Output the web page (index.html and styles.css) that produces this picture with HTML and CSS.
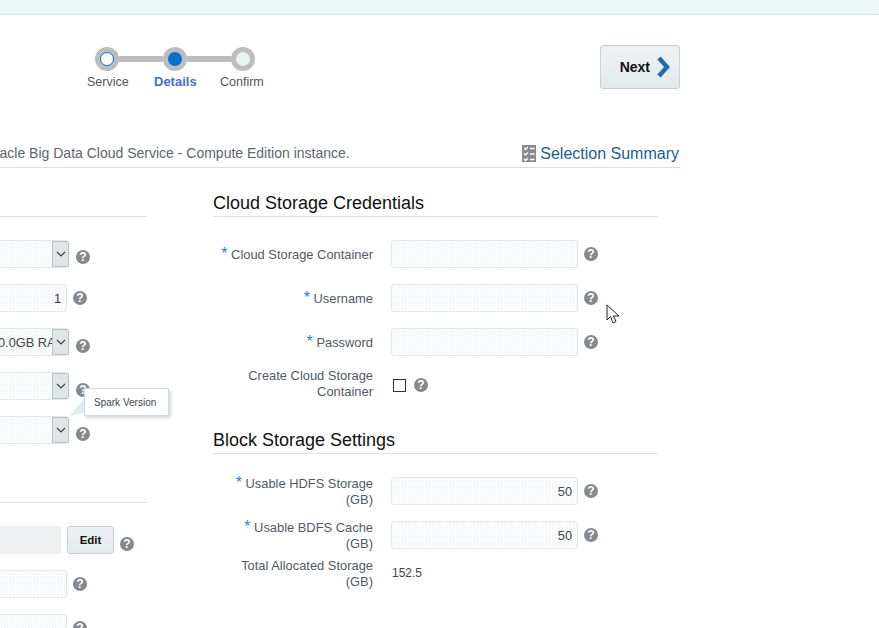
FILE: index.html
```html
<!DOCTYPE html>
<html>
<head>
	<meta charset="utf-8">
	<title>Details</title>
	<link rel="stylesheet" href="styles.css">
</head>
<body>
	<div class="band"></div>
	<div class="page">
		<div class="top">
			<div class="train">
				<div class="track">
					<span class="stop"><i class="dot visited"></i></span>
					<span class="line"></span>
					<span class="stop"><i class="dot current"></i></span>
					<span class="line"></span>
					<span class="stop"><i class="dot todo"></i></span>
				</div>
				<div class="steps">
					<span class="step">Service</span>
					<span class="step step-on">Details</span>
					<span class="step">Confirm</span>
				</div>
			</div>
			<button class="next">Next
				<svg width="14" height="22" viewBox="0 0 14 22"><path d="M3 2l8 9-8 9" fill="none" stroke="#1f6bb0" stroke-width="4.4"/></svg>
			</button>
		</div>
		<div class="intro">
			<span class="intro-text">Oracle Big Data Cloud Service - Compute Edition instance.</span>
			<a class="summary">
				<svg width="14" height="17" viewBox="0 0 14 17"><rect width="14" height="17" fill="#8a8a8a"/><path d="M2 3l1.500 1.500L6 2M2 8.500l1.500 1.500L6 7.500M2 14l1.500 1.500L6 13M8 3.500h4.500M8 9h4.500M8 14.500h4.500" fill="none" stroke="#fff" stroke-width="1.300"/></svg>
				Selection Summary
			</a>
		</div>
		<div class="columns">
			<div class="left">
				<div class="rule-top"></div>
				<div class="row row-first">
					<div class="select"><b class="arrow"><svg width="10" height="6" viewBox="0 0 10 6"><path d="M1 1l4 4 4-4" fill="none" stroke="#444" stroke-width="1.200"/></svg></b></div>
					<i class="help help-wide">?</i>
				</div>
				<div class="row">
					<div class="field num num-left">1</div>
					<i class="help">?</i>
				</div>
				<div class="row">
					<div class="select"><span class="select-val">0.0GB RAM</span><b class="arrow"><svg width="10" height="6" viewBox="0 0 10 6"><path d="M1 1l4 4 4-4" fill="none" stroke="#444" stroke-width="1.200"/></svg></b></div>
					<i class="help help-wide help-low">?</i>
				</div>
				<div class="row">
					<div class="select"><b class="arrow"><svg width="10" height="6" viewBox="0 0 10 6"><path d="M1 1l4 4 4-4" fill="none" stroke="#444" stroke-width="1.200"/></svg></b></div>
					<i class="help help-wide help-low">?</i>
				</div>
				<div class="row">
					<div class="select"><b class="arrow"><svg width="10" height="6" viewBox="0 0 10 6"><path d="M1 1l4 4 4-4" fill="none" stroke="#444" stroke-width="1.200"/></svg></b></div>
					<i class="help help-wide help-low">?</i>
				</div>
				<div class="rule-mid"></div>
				<div class="row row-edit">
					<div class="locked"></div>
					<button class="edit">Edit</button>
					<i class="help help-edit">?</i>
				</div>
				<div class="row">
					<div class="field"></div>
					<i class="help">?</i>
				</div>
				<div class="row">
					<div class="field"></div>
					<i class="help">?</i>
				</div>
				<div class="tip">Spark Version</div>
			</div>
			<div class="right">
				<h2 class="head">Cloud Storage Credentials</h2>
				<div class="form">
					<div class="frow">
						<label class="lab"><em>*</em> Cloud Storage Container</label>
						<div class="field wide"></div>
						<i class="help">?</i>
					</div>
					<div class="frow">
						<label class="lab"><em>*</em> Username</label>
						<div class="field wide"></div>
						<i class="help">?</i>
					</div>
					<div class="frow">
						<label class="lab"><em>*</em> Password</label>
						<div class="field wide"></div>
						<i class="help">?</i>
					</div>
					<div class="frow frow-check">
						<label class="lab">Create Cloud Storage Container</label>
						<span class="check"></span>
						<i class="help">?</i>
					</div>
				</div>
				<h2 class="head head-two">Block Storage Settings</h2>
				<div class="form">
					<div class="frow">
						<label class="lab"><em>*</em> Usable HDFS Storage (GB)</label>
						<div class="field wide num">50</div>
						<i class="help">?</i>
					</div>
					<div class="frow">
						<label class="lab"><em>*</em> Usable BDFS Cache (GB)</label>
						<div class="field wide num">50</div>
						<i class="help">?</i>
					</div>
					<div class="frow frow-text">
						<label class="lab">Total Allocated Storage (GB)</label>
						<span class="val">152.5</span>
					</div>
				</div>
			</div>
		</div>
	</div>
	<svg class="cursor" width="14" height="21" viewBox="0 0 14 21"><path d="M1 1v15l3.500-3.500L7 19l3-1.500-2.500-5.500H13z" fill="#fff" stroke="#222" stroke-width="1"/></svg>
</body>
</html>
```

FILE: styles.css
```css
*{margin: 0; padding: 0; box-sizing: border-box;}
html, body{height: 100%; overflow: hidden; background: #FFF;}
body{font-family: "Liberation Sans", Arial, sans-serif; font-size: 12.8px; color: #4f5a66;}

.band{height: 15px; border-bottom: 1px solid #dde5ea; background: conic-gradient(#e3f3f3 25%, #fbfefe 0 50%, #e3f3f3 0 75%, #fbfefe 0) 0 0/2px 2px;}
.page{width: 680px; position: relative;}

.top{display: flex; justify-content: space-between; align-items: flex-start; height: 74px; padding-top: 30px;}
.train{width: 200px; margin-left: 87px; padding-top: 2px;}
.track{display: flex; align-items: center; margin-left: 8px;}
.stop{width: 24px; height: 24px; border-radius: 50%; background: #bdbdbd; display: flex; align-items: center; justify-content: center; flex: none;}
.line{width: 44px; height: 6px; background: #bdbdbd; flex: none;}
.dot{display: block; width: 14px; height: 14px; border-radius: 50%;}
.visited{background: #FFF; border: 1px solid #0a6fcf;}
.current{background: #0a6fcf;}
.todo{background: #e8f2f1;}
.steps{display: flex; margin-top: 4px; font-size: 12.5px; line-height: 14px;}
.step{color: #555; display: block;}
.step:nth-child(1){width: 67px;}
.step:nth-child(2){width: 66px;}
.step-on{color: #3f6fd1; font-weight: bold; font-size: 13px;}

.next{width: 80px; height: 44px; border: 1px solid #c3d0da; border-radius: 3px; background: linear-gradient(#eef1f2, #e4e9ec); font: bold 14px "Liberation Sans", Arial, sans-serif; color: #111; display: flex; align-items: center; justify-content: flex-end; gap: 6px; padding-right: 9px;}

.intro{display: flex; justify-content: space-between; align-items: center; height: 30px; margin-top: 49px; border-bottom: 1px solid #d6dfe6; white-space: nowrap; overflow: hidden;}
.intro-text{margin-left: -16px; font-size: 14px; color: #5c6670;}
.summary{display: flex; align-items: center; gap: 4px; font-size: 16px; color: #1d5c94; padding: 2px 1px 0 0;}

.columns{display: flex; position: relative;}
.left{width: 147px; flex: none; margin-right: 66px; position: relative;}
.right{width: 445px; flex: none;}

.rule-top{height: 49px; border-bottom: 1px solid #dde4e9;}
.row{display: flex; justify-content: flex-end; height: 28px; margin-top: 16px; width: 100%; padding-right: 56px; position: relative;}
.row-first{margin-top: 23px;}
.row-edit{padding-right: 33px;}
.rule-mid{height: 43px; border-bottom: 1px solid #dde4e9; margin-top: 16px; margin-bottom: 23px;}
.rule-mid + .row{margin-top: 0;}

.field, .select, .locked{height: 28px; border: 1px solid #e3e8ec; border-radius: 3px; background: conic-gradient(#f3f7f7 25%, #FFF 0 50%, #f3f7f7 0 75%, #FFF 0) 0 0/3px 3px;}
.row .field{width: 80px; margin-right: 24px; flex: none;}
.num{text-align: right; line-height: 28px; padding-right: 5px; color: #3c3a6b;}
.num-left{color: #35296e;}
.wide{width: 187px; flex: none; color: #444;}
.select{width: 78px; margin-right: 22px; border-left: 0; border-right: 0; padding-left: 7px; display: flex; justify-content: flex-end; overflow: hidden; flex: none;}
.select-val{flex: 1; min-width: 0; line-height: 28px; color: #444; white-space: nowrap; overflow: hidden;}
.arrow{display: flex; align-items: center; justify-content: center; width: 17px; height: 26px; flex: none; background: #dfe4e7; border: 1px solid #b9c1c6;}
.locked{width: 70px; margin-right: 6px; border: 0; background: #eef0f1; flex: none;}
.edit{width: 47px; height: 28px; border: 1px solid #c3d0da; border-radius: 3px; background: linear-gradient(#eef1f2, #e4e9ec); font: bold 11.5px "Liberation Sans", Arial, sans-serif; color: #111; flex: none;}

.help{display: block; width: 14px; height: 14px; border-radius: 50%; background: #85898d; color: #FFF; font: bold 12px/14px "Liberation Sans", Arial, sans-serif; text-align: center; flex: none;}
.row .help{position: absolute; top: 7px; right: 60px;}
.row .help-wide{right: 57px; top: 10px;}
.row .help-low{top: 11px;}
.row .help-edit{right: 13px; top: 11px;}

.tip{position: absolute; left: 84px; top: 220px; width: 85px; height: 28px; background: #FFF; border: 1px solid #cfdbe3; box-shadow: 2px 2px 3px #d5d9dc; font-size: 10px; line-height: 27px; padding-left: 9px; color: #3e4650;}
.tip::before{content: ""; position: absolute; left: -15px; top: 9px; width: 14px; height: 18px; background: #dfe9ee; clip-path: polygon(0 100%, 100% 0, 100% 80%);}

.head{font-size: 18px; font-weight: normal; color: #111; line-height: 24px; height: 49px; padding-top: 23px; border-bottom: 1px solid #dde4e9;}
.head-two{height: 37px; padding-top: 11px; margin-top: 19px;}
.form{display: flex; flex-direction: column; gap: 16px; margin-top: 23px;}
.frow{display: flex; align-items: center; height: 28px;}
.frow-check{margin-top: -2px;}
.frow-text{margin-top: -6px;}
.lab{width: 158px; margin: -1px 18px -3px 2px; text-align: right; font-size: 12.9px; line-height: 16px; color: #4f5a66; display: block; flex: none;}
.frow-check .lab{margin: -2px 18px -2px 2px;}
.lab em{font-style: normal; font-size: 16px; line-height: 12px; color: #2f80d8;}
.frow .help{margin-left: 6px;}
.check{width: 13px; height: 13px; border: 1px solid #333; margin: 2px 0 0 2px; flex: none;}
.frow .check + .help{margin: 2px 0 0 8px;}
.val{margin-left: 1px; font-size: 12px; color: #444;}

.cursor{position: absolute; left: 606px; top: 304px;}
```
